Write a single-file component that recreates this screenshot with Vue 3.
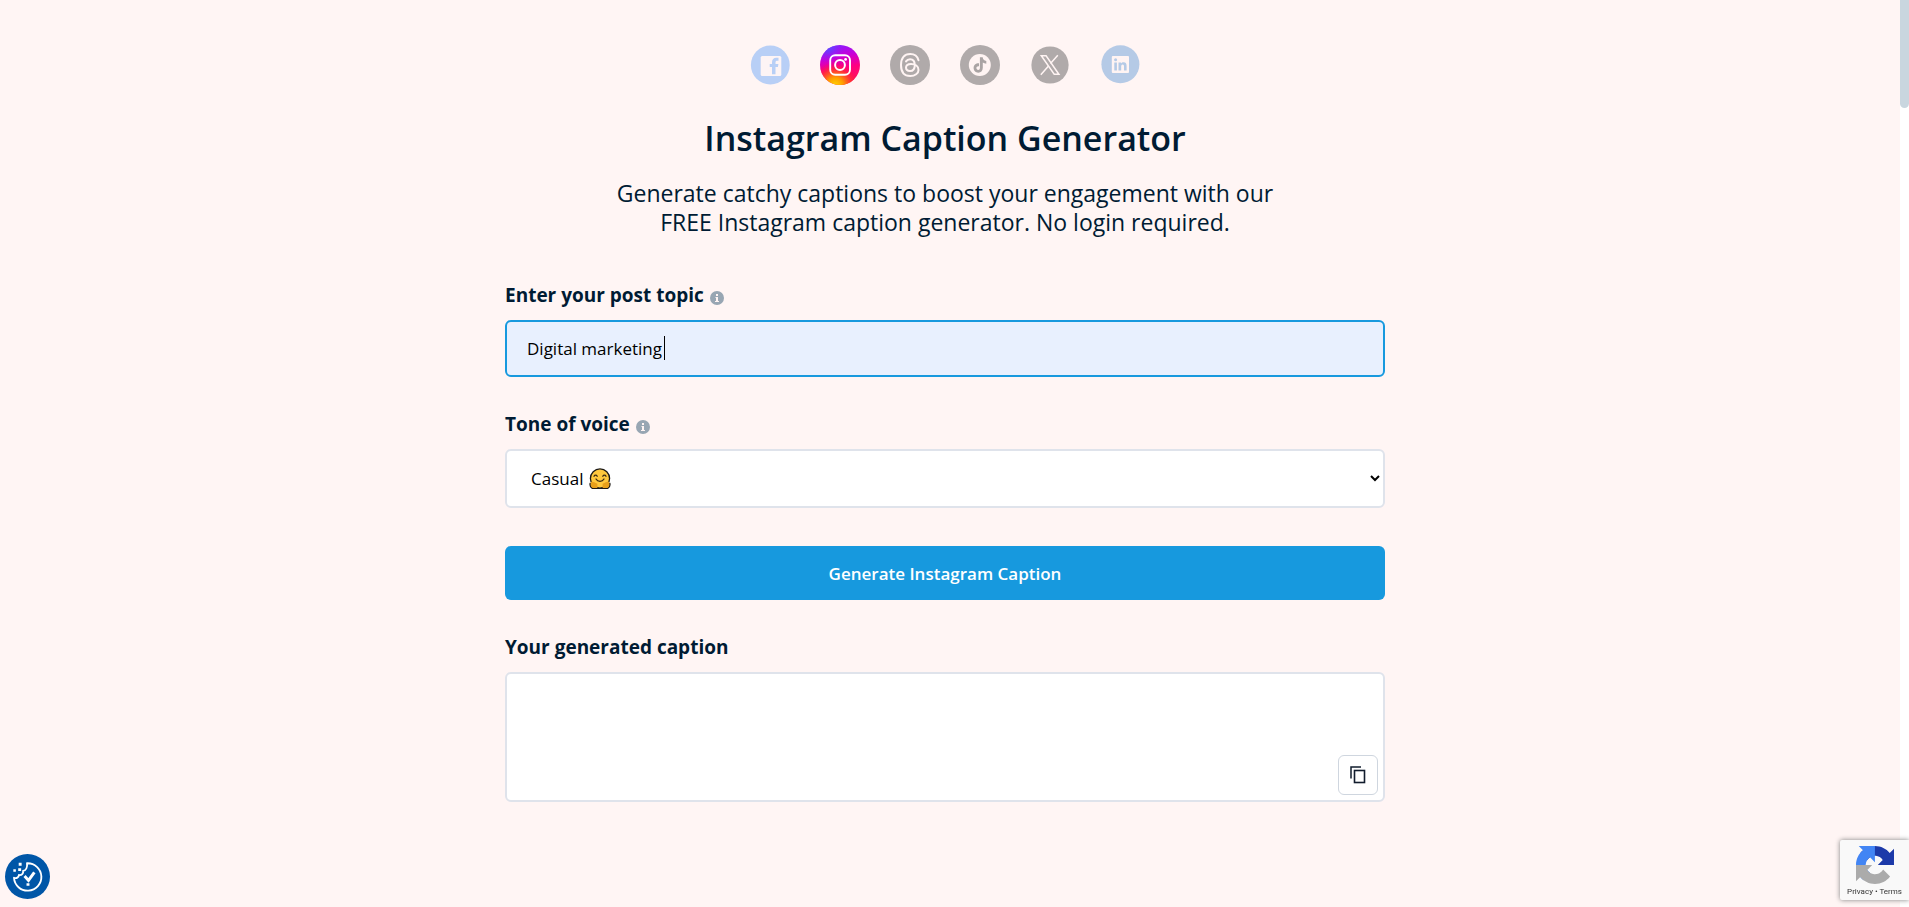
<script setup>
    import { ref } from 'vue';

    const topic = ref('Digital marketing');
    const tone = ref('casual');
    const caption = ref('');

    function generateCaption(){
        if(!topic.value) return;
        caption.value = '';
    }

    function copyCaption(){
        navigator.clipboard.writeText(caption.value);
    }
</script>

<template>
    <div class="page">
        <main class="generator">
            <nav class="networks">
                <a href="#facebook" aria-label="Facebook">
                    <svg viewBox="0 0 40 40">
                        <circle cx="20.3" cy="20" r="19.4" fill="#b8cff6"/>
                        <rect x="10.700" y="11" width="20.600" height="20" rx="1.500" fill="#fdf4f5"/>
                        <path d="M22 29.200v-7.200h-2.300v-3.100H22v-1.700c0-3 1.700-4.500 4.300-4.500h2.200v3.100h-1.300c-1.200 0-1.700.6-1.700 1.600v1.500h2.900l-.5 3.100h-2.400v7.200z" fill="#b8cff6"/>
                    </svg>
                </a>
                <a href="#instagram" aria-label="Instagram">
                    <svg viewBox="0 0 40 40">
                        <defs>
                            <linearGradient id="igBase" x1="0.35" y1="0" x2="0.55" y2="1">
                                <stop offset="0" stop-color="#8a1cff"/>
                                <stop offset="0.3" stop-color="#c800d8"/>
                                <stop offset="0.6" stop-color="#ff0080"/>
                                <stop offset="1" stop-color="#ff1a50"/>
                            </linearGradient>
                            <radialGradient id="igGlow" cx="0.38" cy="1.02" r="0.6">
                                <stop offset="0" stop-color="#ffd800"/>
                                <stop offset="0.35" stop-color="#ff9a00"/>
                                <stop offset="0.7" stop-color="#ff3030" stop-opacity="0.8"/>
                                <stop offset="1" stop-color="#ff0060" stop-opacity="0"/>
                            </radialGradient>
                            <radialGradient id="igBlue" cx="0.2" cy="0.05" r="0.4">
                                <stop offset="0" stop-color="#5350ff"/>
                                <stop offset="1" stop-color="#8a1cff" stop-opacity="0"/>
                            </radialGradient>
                        </defs>
                        <circle cx="20" cy="20" r="20" fill="url(#igBase)"/>
                        <circle cx="20" cy="20" r="20" fill="url(#igGlow)"/>
                        <circle cx="20" cy="20" r="20" fill="url(#igBlue)"/>
                        <rect x="10.2" y="10.200" width="19.800" height="19.600" rx="5" fill="none" stroke="#fff" stroke-width="1.900"/>
                        <circle cx="20" cy="20" r="4.900" fill="none" stroke="#fff" stroke-width="2"/>
                        <circle cx="25.600" cy="14.400" r="1.400" fill="#fff"/>
                    </svg>
                </a>
                <a href="#threads" aria-label="Threads">
                    <svg viewBox="0 0 40 40">
                        <circle cx="20" cy="20" r="20" fill="#b0aaaa"/>
                        <path d="M28.500 15.200C27.400 11.100 24.500 9 20.300 9c-6 0-9.300 3.900-9.300 11s3.300 11 9.300 11c4.700 0 8.200-2.600 8.200-6.100 0-3.900-3.300-6-7.500-6-3.100 0-5 1.500-5 3.700 0 2 1.700 3.400 4 3.400 3.100 0 4.800-2.200 4.800-5.800 0-3.900-1.600-5.900-4.700-5.900-1.900 0-3.200.7-4.100 2.100" fill="none" stroke="#fff4f3" stroke-width="2" stroke-linecap="round"/>
                    </svg>
                </a>
                <a href="#tiktok" aria-label="TikTok">
                    <svg viewBox="0 0 40 40">
                        <circle cx="20" cy="20" r="20" fill="#b0aaaa"/>
                        <circle cx="19.800" cy="20" r="11" fill="#fff4f3"/>
                        <path d="M19.900 12.200h2.800c.2 2.200 1.400 3.500 3.600 3.700v2.800c-1.400 0-2.500-.4-3.500-1.100v5.200c0 3.200-2 4.900-4.500 4.900-2.600 0-4.700-2-4.700-4.700 0-2.900 2.300-4.900 5.400-4.700v2.900c-1.500-.3-2.600.5-2.600 1.800 0 1.100.8 1.900 1.800 1.900 1.100 0 1.700-.8 1.700-2z" fill="#aaa4a4"/>
                    </svg>
                </a>
                <a href="#x" aria-label="X">
                    <svg viewBox="0 0 40 40">
                        <circle cx="20" cy="20" r="18.600" fill="#b0aaaa"/>
                        <path d="M11.300 10.800h4.800l12.800 18.400h-4.700z" fill="none" stroke="#fff4f3" stroke-width="1.500"/>
                        <path d="M27.800 10.300l-7.300 8.300M18.300 21.200L10.800 29.700" stroke="#fff4f3" stroke-width="1.500"/>
                    </svg>
                </a>
                <a href="#linkedin" aria-label="LinkedIn">
                    <svg viewBox="0 0 40 40">
                        <circle cx="20.400" cy="19.300" r="19" fill="#b5cae6"/>
                        <rect x="11.800" y="11" width="17.200" height="17" rx="1" fill="#fff4f3"/>
                        <path d="M14.300 17.400h2.600v8.200h-2.600zM18.500 17.400H21v1.100c.5-.8 1.400-1.300 2.500-1.300 2.500 0 3.100 1.600 3.100 3.900v4.500H24v-4c0-1.200-.1-2.200-1.300-2.200s-1.500 1-1.500 2.200v4h-2.700z" fill="#b5cae6"/>
                        <circle cx="15.600" cy="14.700" r="1.500" fill="#b5cae6"/>
                    </svg>
                </a>
            </nav>

            <h1>Instagram Caption Generator</h1>
            <p class="intro">Generate catchy captions to boost your engagement with our<br>FREE Instagram caption generator. No login required.</p>

            <form v-on:submit.prevent="generateCaption()">
                <div class="label-row">
                    <label for="topic">Enter your post topic</label>
                    <svg class="info" viewBox="0 0 14 14">
                        <circle cx="7" cy="7" r="7" fill="#98a6b3"/>
                        <path d="M6 3h2v2H6zM5.500 6H8v4h1v1H5v-1h1V7h-.5z" fill="#fff4f3"/>
                    </svg>
                </div>
                <div class="control">
                    <input id="topic" type="text" v-model="topic">
                    <span class="caret"></span>
                </div>

                <div class="label-row">
                    <label for="tone">Tone of voice</label>
                    <svg class="info" viewBox="0 0 14 14">
                        <circle cx="7" cy="7" r="7" fill="#98a6b3"/>
                        <path d="M6 3h2v2H6zM5.500 6H8v4h1v1H5v-1h1V7h-.5z" fill="#fff4f3"/>
                    </svg>
                </div>
                <div class="control">
                    <select id="tone" v-model="tone">
                        <option value="casual">Casual</option>
                    </select>
                    <svg class="emoji" viewBox="0 0 22 22">
                        <circle cx="11" cy="10.500" r="9.600" fill="#ffc83d" stroke="#1d1a16" stroke-width="1.300"/>
                        <path d="M1.200 15c1-1.500 2.500-1.700 4-.8l3.200 1.600v4.700H3.300C1.500 19.500.8 17 1.200 15zM20.800 15c-1-1.500-2.500-1.700-4-.8l-3.200 1.600v4.700h5.100c1.800-1 2.500-3.500 2.100-5.500z" fill="#e8a01c"/>
                        <path d="M1.200 15c-.5 2 .3 4.500 2.100 5.500h15.400c1.800-1 2.600-3.500 2.100-5.500" fill="none" stroke="#1d1a16" stroke-width="1.200"/>
                        <path d="M5 8.200c.8-1.500 2.400-1.500 3.200 0M13.800 8.200c.8-1.500 2.400-1.500 3.200 0M7 11c1.800 3.100 6.200 3.100 8 0" fill="none" stroke="#3b2a12" stroke-width="1.300" stroke-linecap="round"/>
                    </svg>
                </div>

                <button class="generate" type="submit">Generate Instagram Caption</button>

                <div class="label-row">
                    <label for="caption">Your generated caption</label>
                </div>
                <div class="control">
                    <textarea id="caption" v-model="caption" readonly></textarea>
                    <button class="copy" type="button" aria-label="Copy caption" v-on:click="copyCaption()">
                        <svg viewBox="0 0 16 18">
                            <path d="M1 12.500V1h10" fill="none" stroke="#111c2d" stroke-width="1.500"/>
                            <rect x="4.500" y="4.500" width="10" height="12" fill="#fff" stroke="#111c2d" stroke-width="1.600"/>
                        </svg>
                    </button>
                </div>
            </form>
        </main>

        <button class="cookie" type="button" aria-label="Cookie settings">
            <svg viewBox="0 0 46 46">
                <circle cx="23" cy="23" r="23" fill="#0056a7"/>
                <path d="M22.500 9.500a14 14 0 1 1-13.300 14.800c2.500 1 5-.3 5-2.800 3 .5 4.800-1.500 4.300-4.200 3-.5 4.500-4 4-7.800z" fill="none" stroke="#fff" stroke-width="1.900" stroke-linejoin="round"/>
                <path d="M20 22.500l4 4.500 6-8.300" fill="none" stroke="#fff" stroke-width="3"/>
                <path d="M22 30h3v2.500h-3zM14 9h3v3h-3zM13.500 14.500h3v3h-3zM8.500 15.500h2.600v2.600H8.500z" fill="#fff"/>
            </svg>
        </button>

        <div class="scrollbar"><div class="thumb"></div></div>

        <div class="recaptcha">
            <svg viewBox="0 0 64 64">
                <path d="M64 31.955l-.033-1.370V4.687l-7.160 7.160C50.948 4.674 42.033.093 32.050.093c-10.400 0-19.622 4.960-25.458 12.640l11.736 11.860a15.550 15.550 0 0 1 4.754-5.334c2.050-1.600 4.952-2.906 8.968-2.906.485 0 .860.057 1.135.163 4.976.393 9.288 3.140 11.828 7.124l-8.307 8.307L64 31.953" fill="#1c3aa9"/>
                <path d="M31.862.094l-1.370.033H4.594l7.160 7.160C4.580 13.147 0 22.060 0 32.046c0 10.400 4.960 19.622 12.640 25.458L24.500 45.768a15.550 15.550 0 0 1-5.334-4.754c-1.600-2.050-2.906-4.952-2.906-8.968 0-.485.057-.860.163-1.135.393-4.976 3.140-9.288 7.124-11.828l8.307 8.307L31.860.095" fill="#4285f4"/>
                <path d="M.001 32.045l.033 1.370v25.898l7.160-7.160c5.860 7.173 14.774 11.754 24.760 11.754 10.400 0 19.622-4.960 25.458-12.640l-11.736-11.860a15.550 15.550 0 0 1-4.754 5.334c-2.050 1.600-4.952 2.906-8.968 2.906-.485 0-.860-.057-1.135-.163-4.976-.393-9.288-3.140-11.828-7.124l8.307-8.307c-10.522.040-22.400.066-27.295-.005" fill="#ababab"/>
            </svg>
            <div class="terms"><a href="#privacy">Privacy</a> • <a href="#terms">Terms</a></div>
        </div>
    </div>
</template>

<style>
    body{
        background-color: #fff5f4;
    }
</style>

<style scoped>
    .page{
        min-height: 100vh;
        box-sizing: border-box;
        padding: 45px 19px 40px 0;
        background-color: #fff5f4;
        color: #001b33;
        font-family: 'Segoe UI', 'Open Sans', 'Noto Sans', sans-serif;
    }
    .generator{
        width: 100%;
        max-width: 880px;
        margin: 0 auto;
    }
    .networks{
        display: flex;
        justify-content: center;
        gap: 30px;
    }
    .networks a, .networks svg{
        display: block;
        width: 40px;
        height: 40px;
    }
    h1{
        margin: 29px 0 0;
        font-size: 34px;
        line-height: 48px;
        font-weight: 600;
        text-align: center;
    }
    .intro{
        margin: 17px 0 44px;
        font-size: 23px;
        line-height: 29px;
        text-align: center;
    }
    .label-row{
        display: flex;
        align-items: center;
        gap: 6px;
        height: 28px;
        margin-bottom: 11px;
    }
    label{
        font-size: 19px;
        line-height: 28px;
        font-weight: 700;
    }
    .info{
        width: 14px;
        height: 14px;
        margin-top: 5px;
    }
    .control{
        position: relative;
        margin-bottom: 33px;
    }
    input, select, textarea{
        display: block;
        width: 100%;
        box-sizing: border-box;
        border: 2px solid #dfe3eb;
        border-radius: 6px;
        background-color: #fff;
        color: #000;
        font-family: inherit;
        font-size: 17px;
        outline: none;
    }
    input{
        height: 57px;
        padding: 0 20px;
        border-color: #1799de;
        background-color: #e8f0fe;
    }
    .caret{
        position: absolute;
        top: 16px;
        left: 159px;
        width: 1px;
        height: 24px;
        background-color: #000;
    }
    select{
        height: 59px;
        padding: 0 0 0 20px;
    }
    .emoji{
        position: absolute;
        top: 19px;
        left: 84px;
        width: 22px;
        height: 22px;
        pointer-events: none;
    }
    textarea{
        height: 130px;
        padding: 16px 20px;
        resize: none;
    }
    button{
        font-family: inherit;
        cursor: pointer;
    }
    .generate{
        display: block;
        width: 100%;
        height: 54px;
        margin: 38px 0 33px;
        border: none;
        border-radius: 6px;
        background-color: #1799de;
        color: #fff;
        font-size: 17px;
        font-weight: 600;
    }
    .copy{
        position: absolute;
        right: 7px;
        bottom: 7px;
        display: flex;
        align-items: center;
        justify-content: center;
        width: 40px;
        height: 40px;
        padding: 0;
        border: 1px solid #cfd6df;
        border-radius: 6px;
        background-color: #fff;
    }
    .copy svg{
        width: 16px;
        height: 18px;
    }
    .cookie{
        position: fixed;
        left: 5px;
        bottom: 8px;
        width: 45px;
        height: 45px;
        padding: 0;
        border: none;
        background: none;
    }
    .cookie svg{
        display: block;
        width: 45px;
        height: 45px;
    }
    .scrollbar{
        position: fixed;
        top: 0;
        right: 0;
        bottom: 0;
        width: 9px;
        background-color: #fff;
    }
    .thumb{
        height: 108px;
        border-radius: 0 0 5px 5px;
        background-color: #c9d6df;
    }
    .recaptcha{
        position: fixed;
        right: 0;
        bottom: 7px;
        width: 69px;
        height: 60px;
        border-radius: 2px 0 0 2px;
        background-color: #f9f9f9;
        box-shadow: 0 0 5px #808080;
        text-align: center;
    }
    .recaptcha svg{
        display: block;
        width: 38px;
        height: 38px;
        margin: 6px auto 3px 16px;
    }
    .terms{
        font-family: Roboto, sans-serif;
        font-size: 8px;
        line-height: 10px;
        color: #333;
    }
    .terms a{
        color: inherit;
        text-decoration: none;
    }
</style>
